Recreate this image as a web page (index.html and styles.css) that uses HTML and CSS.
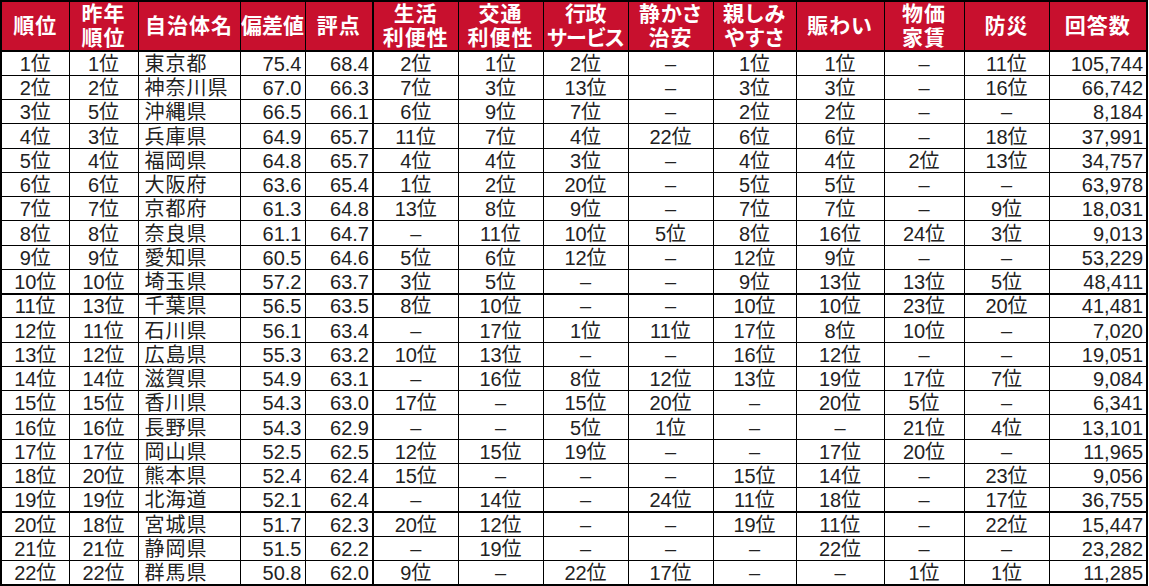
FILE: index.html
```html
<!DOCTYPE html>
<html lang="ja">
<head>
<meta charset="utf-8">
<title>都道府県ランキング</title>
<link rel="stylesheet" href="styles.css">
</head>
<body>
<table class="rank">
  <colgroup>
    <col class="w-rank"><col class="w-prev"><col class="w-name"><col class="w-dev"><col class="w-score">
    <col class="w-a"><col class="w-b"><col class="w-c"><col class="w-d"><col class="w-e">
    <col class="w-f"><col class="w-g"><col class="w-h"><col class="w-n">
  </colgroup>
  <thead>
    <tr>
      <th>順位</th>
      <th>昨年<br>順位</th>
      <th>自治体名</th>
      <th class="tight">偏差値</th>
      <th>評点</th>
      <th class="bl">生活<br>利便性</th>
      <th>交通<br>利便性</th>
      <th class="narrow">行政<br>サービス</th>
      <th>静かさ<br>治安</th>
      <th>親しみ<br>やすさ</th>
      <th>賑わい</th>
      <th>物価<br>家賃</th>
      <th>防災</th>
      <th>回答数</th>
    </tr>
  </thead>
  <tbody>
    <tr><td class="c">1位</td><td class="c">1位</td><td class="l">東京都</td><td class="r">75.4</td><td class="r">68.4</td><td class="c bl">2位</td><td class="c">1位</td><td class="c">2位</td><td class="c">–</td><td class="c">1位</td><td class="c">1位</td><td class="c">–</td><td class="c">11位</td><td class="r">105,744</td></tr>
    <tr><td class="c">2位</td><td class="c">2位</td><td class="l">神奈川県</td><td class="r">67.0</td><td class="r">66.3</td><td class="c bl">7位</td><td class="c">3位</td><td class="c">13位</td><td class="c">–</td><td class="c">3位</td><td class="c">3位</td><td class="c">–</td><td class="c">16位</td><td class="r">66,742</td></tr>
    <tr><td class="c">3位</td><td class="c">5位</td><td class="l">沖縄県</td><td class="r">66.5</td><td class="r">66.1</td><td class="c bl">6位</td><td class="c">9位</td><td class="c">7位</td><td class="c">–</td><td class="c">2位</td><td class="c">2位</td><td class="c">–</td><td class="c">–</td><td class="r">8,184</td></tr>
    <tr><td class="c">4位</td><td class="c">3位</td><td class="l">兵庫県</td><td class="r">64.9</td><td class="r">65.7</td><td class="c bl">11位</td><td class="c">7位</td><td class="c">4位</td><td class="c">22位</td><td class="c">6位</td><td class="c">6位</td><td class="c">–</td><td class="c">18位</td><td class="r">37,991</td></tr>
    <tr><td class="c">5位</td><td class="c">4位</td><td class="l">福岡県</td><td class="r">64.8</td><td class="r">65.7</td><td class="c bl">4位</td><td class="c">4位</td><td class="c">3位</td><td class="c">–</td><td class="c">4位</td><td class="c">4位</td><td class="c">2位</td><td class="c">13位</td><td class="r">34,757</td></tr>
    <tr><td class="c">6位</td><td class="c">6位</td><td class="l">大阪府</td><td class="r">63.6</td><td class="r">65.4</td><td class="c bl">1位</td><td class="c">2位</td><td class="c">20位</td><td class="c">–</td><td class="c">5位</td><td class="c">5位</td><td class="c">–</td><td class="c">–</td><td class="r">63,978</td></tr>
    <tr><td class="c">7位</td><td class="c">7位</td><td class="l">京都府</td><td class="r">61.3</td><td class="r">64.8</td><td class="c bl">13位</td><td class="c">8位</td><td class="c">9位</td><td class="c">–</td><td class="c">7位</td><td class="c">7位</td><td class="c">–</td><td class="c">9位</td><td class="r">18,031</td></tr>
    <tr><td class="c">8位</td><td class="c">8位</td><td class="l">奈良県</td><td class="r">61.1</td><td class="r">64.7</td><td class="c bl">–</td><td class="c">11位</td><td class="c">10位</td><td class="c">5位</td><td class="c">8位</td><td class="c">16位</td><td class="c">24位</td><td class="c">3位</td><td class="r">9,013</td></tr>
    <tr><td class="c">9位</td><td class="c">9位</td><td class="l">愛知県</td><td class="r">60.5</td><td class="r">64.6</td><td class="c bl">5位</td><td class="c">6位</td><td class="c">12位</td><td class="c">–</td><td class="c">12位</td><td class="c">9位</td><td class="c">–</td><td class="c">–</td><td class="r">53,229</td></tr>
    <tr><td class="c">10位</td><td class="c">10位</td><td class="l">埼玉県</td><td class="r">57.2</td><td class="r">63.7</td><td class="c bl">3位</td><td class="c">5位</td><td class="c">–</td><td class="c">–</td><td class="c">9位</td><td class="c">13位</td><td class="c">13位</td><td class="c">5位</td><td class="r">48,411</td></tr>
    <tr class="sep"><td class="c">11位</td><td class="c">13位</td><td class="l">千葉県</td><td class="r">56.5</td><td class="r">63.5</td><td class="c bl">8位</td><td class="c">10位</td><td class="c">–</td><td class="c">–</td><td class="c">10位</td><td class="c">10位</td><td class="c">23位</td><td class="c">20位</td><td class="r">41,481</td></tr>
    <tr><td class="c">12位</td><td class="c">11位</td><td class="l">石川県</td><td class="r">56.1</td><td class="r">63.4</td><td class="c bl">–</td><td class="c">17位</td><td class="c">1位</td><td class="c">11位</td><td class="c">17位</td><td class="c">8位</td><td class="c">10位</td><td class="c">–</td><td class="r">7,020</td></tr>
    <tr><td class="c">13位</td><td class="c">12位</td><td class="l">広島県</td><td class="r">55.3</td><td class="r">63.2</td><td class="c bl">10位</td><td class="c">13位</td><td class="c">–</td><td class="c">–</td><td class="c">16位</td><td class="c">12位</td><td class="c">–</td><td class="c">–</td><td class="r">19,051</td></tr>
    <tr><td class="c">14位</td><td class="c">14位</td><td class="l">滋賀県</td><td class="r">54.9</td><td class="r">63.1</td><td class="c bl">–</td><td class="c">16位</td><td class="c">8位</td><td class="c">12位</td><td class="c">13位</td><td class="c">19位</td><td class="c">17位</td><td class="c">7位</td><td class="r">9,084</td></tr>
    <tr><td class="c">15位</td><td class="c">15位</td><td class="l">香川県</td><td class="r">54.3</td><td class="r">63.0</td><td class="c bl">17位</td><td class="c">–</td><td class="c">15位</td><td class="c">20位</td><td class="c">–</td><td class="c">20位</td><td class="c">5位</td><td class="c">–</td><td class="r">6,341</td></tr>
    <tr><td class="c">16位</td><td class="c">16位</td><td class="l">長野県</td><td class="r">54.3</td><td class="r">62.9</td><td class="c bl">–</td><td class="c">–</td><td class="c">5位</td><td class="c">1位</td><td class="c">–</td><td class="c">–</td><td class="c">21位</td><td class="c">4位</td><td class="r">13,101</td></tr>
    <tr><td class="c">17位</td><td class="c">17位</td><td class="l">岡山県</td><td class="r">52.5</td><td class="r">62.5</td><td class="c bl">12位</td><td class="c">15位</td><td class="c">19位</td><td class="c">–</td><td class="c">–</td><td class="c">17位</td><td class="c">20位</td><td class="c">–</td><td class="r">11,965</td></tr>
    <tr><td class="c">18位</td><td class="c">20位</td><td class="l">熊本県</td><td class="r">52.4</td><td class="r">62.4</td><td class="c bl">15位</td><td class="c">–</td><td class="c">–</td><td class="c">–</td><td class="c">15位</td><td class="c">14位</td><td class="c">–</td><td class="c">23位</td><td class="r">9,056</td></tr>
    <tr><td class="c">19位</td><td class="c">19位</td><td class="l">北海道</td><td class="r">52.1</td><td class="r">62.4</td><td class="c bl">–</td><td class="c">14位</td><td class="c">–</td><td class="c">24位</td><td class="c">11位</td><td class="c">18位</td><td class="c">–</td><td class="c">17位</td><td class="r">36,755</td></tr>
    <tr class="sep"><td class="c">20位</td><td class="c">18位</td><td class="l">宮城県</td><td class="r">51.7</td><td class="r">62.3</td><td class="c bl">20位</td><td class="c">12位</td><td class="c">–</td><td class="c">–</td><td class="c">19位</td><td class="c">11位</td><td class="c">–</td><td class="c">22位</td><td class="r">15,447</td></tr>
    <tr><td class="c">21位</td><td class="c">21位</td><td class="l">静岡県</td><td class="r">51.5</td><td class="r">62.2</td><td class="c bl">–</td><td class="c">19位</td><td class="c">–</td><td class="c">–</td><td class="c">–</td><td class="c">22位</td><td class="c">–</td><td class="c">–</td><td class="r">23,282</td></tr>
    <tr><td class="c">22位</td><td class="c">22位</td><td class="l">群馬県</td><td class="r">50.8</td><td class="r">62.0</td><td class="c bl">9位</td><td class="c">–</td><td class="c">22位</td><td class="c">17位</td><td class="c">–</td><td class="c">–</td><td class="c">1位</td><td class="c">1位</td><td class="r">11,285</td></tr>
  </tbody>
</table>
</body>
</html>
```

FILE: styles.css
```css
html, body {
  margin: 0;
  padding: 0;
  background: #ffffff;
}

.rank {
  border-collapse: collapse;
  table-layout: fixed;
  width: 1146px;
  font-family: "Liberation Sans", "Noto Sans CJK JP", sans-serif;
  color: #222222;
  border: 2px solid #000;
}

.w-rank { width: 68px; }
.w-prev { width: 69px; }
.w-name { width: 102px; }
.w-dev { width: 65px; }
.w-score { width: 68px; }
.w-a { width: 85px; }
.w-b { width: 85px; }
.w-c { width: 85px; }
.w-d { width: 85px; }
.w-e { width: 83px; }
.w-f { width: 88px; }
.w-g { width: 80px; }
.w-h { width: 85px; }
.w-n { width: 98px; }

.rank th {
  box-sizing: border-box;
  height: 48px;
  padding: 0;
  background: #c8102e;
  color: #ffffff;
  font-weight: 700;
  font-size: 21px;
  line-height: 24px;
  text-align: center;
  vertical-align: middle;
  border: 1px solid #000;
  border-bottom: 2px solid #000;
  font-feature-settings: "palt";
  letter-spacing: 1px;
  white-space: nowrap;
}

.rank th.tight {
  letter-spacing: 0;
}

.rank th.narrow {
  letter-spacing: -0.5px;
}

.rank td {
  box-sizing: border-box;
  height: 24.25px;
  padding: 0;
  font-size: 20px;
  line-height: 22px;
  vertical-align: bottom;
  border: 1px solid #000;
  white-space: nowrap;
}

.rank .bl {
  border-left: 2px solid #000;
}

.rank tr.sep td {
  border-top: 2px solid #000;
}

.c { text-align: center; }
.r { text-align: right; padding-right: 3px !important; }
.l { text-align: left; padding-left: 6px !important; letter-spacing: 1px; }
```
